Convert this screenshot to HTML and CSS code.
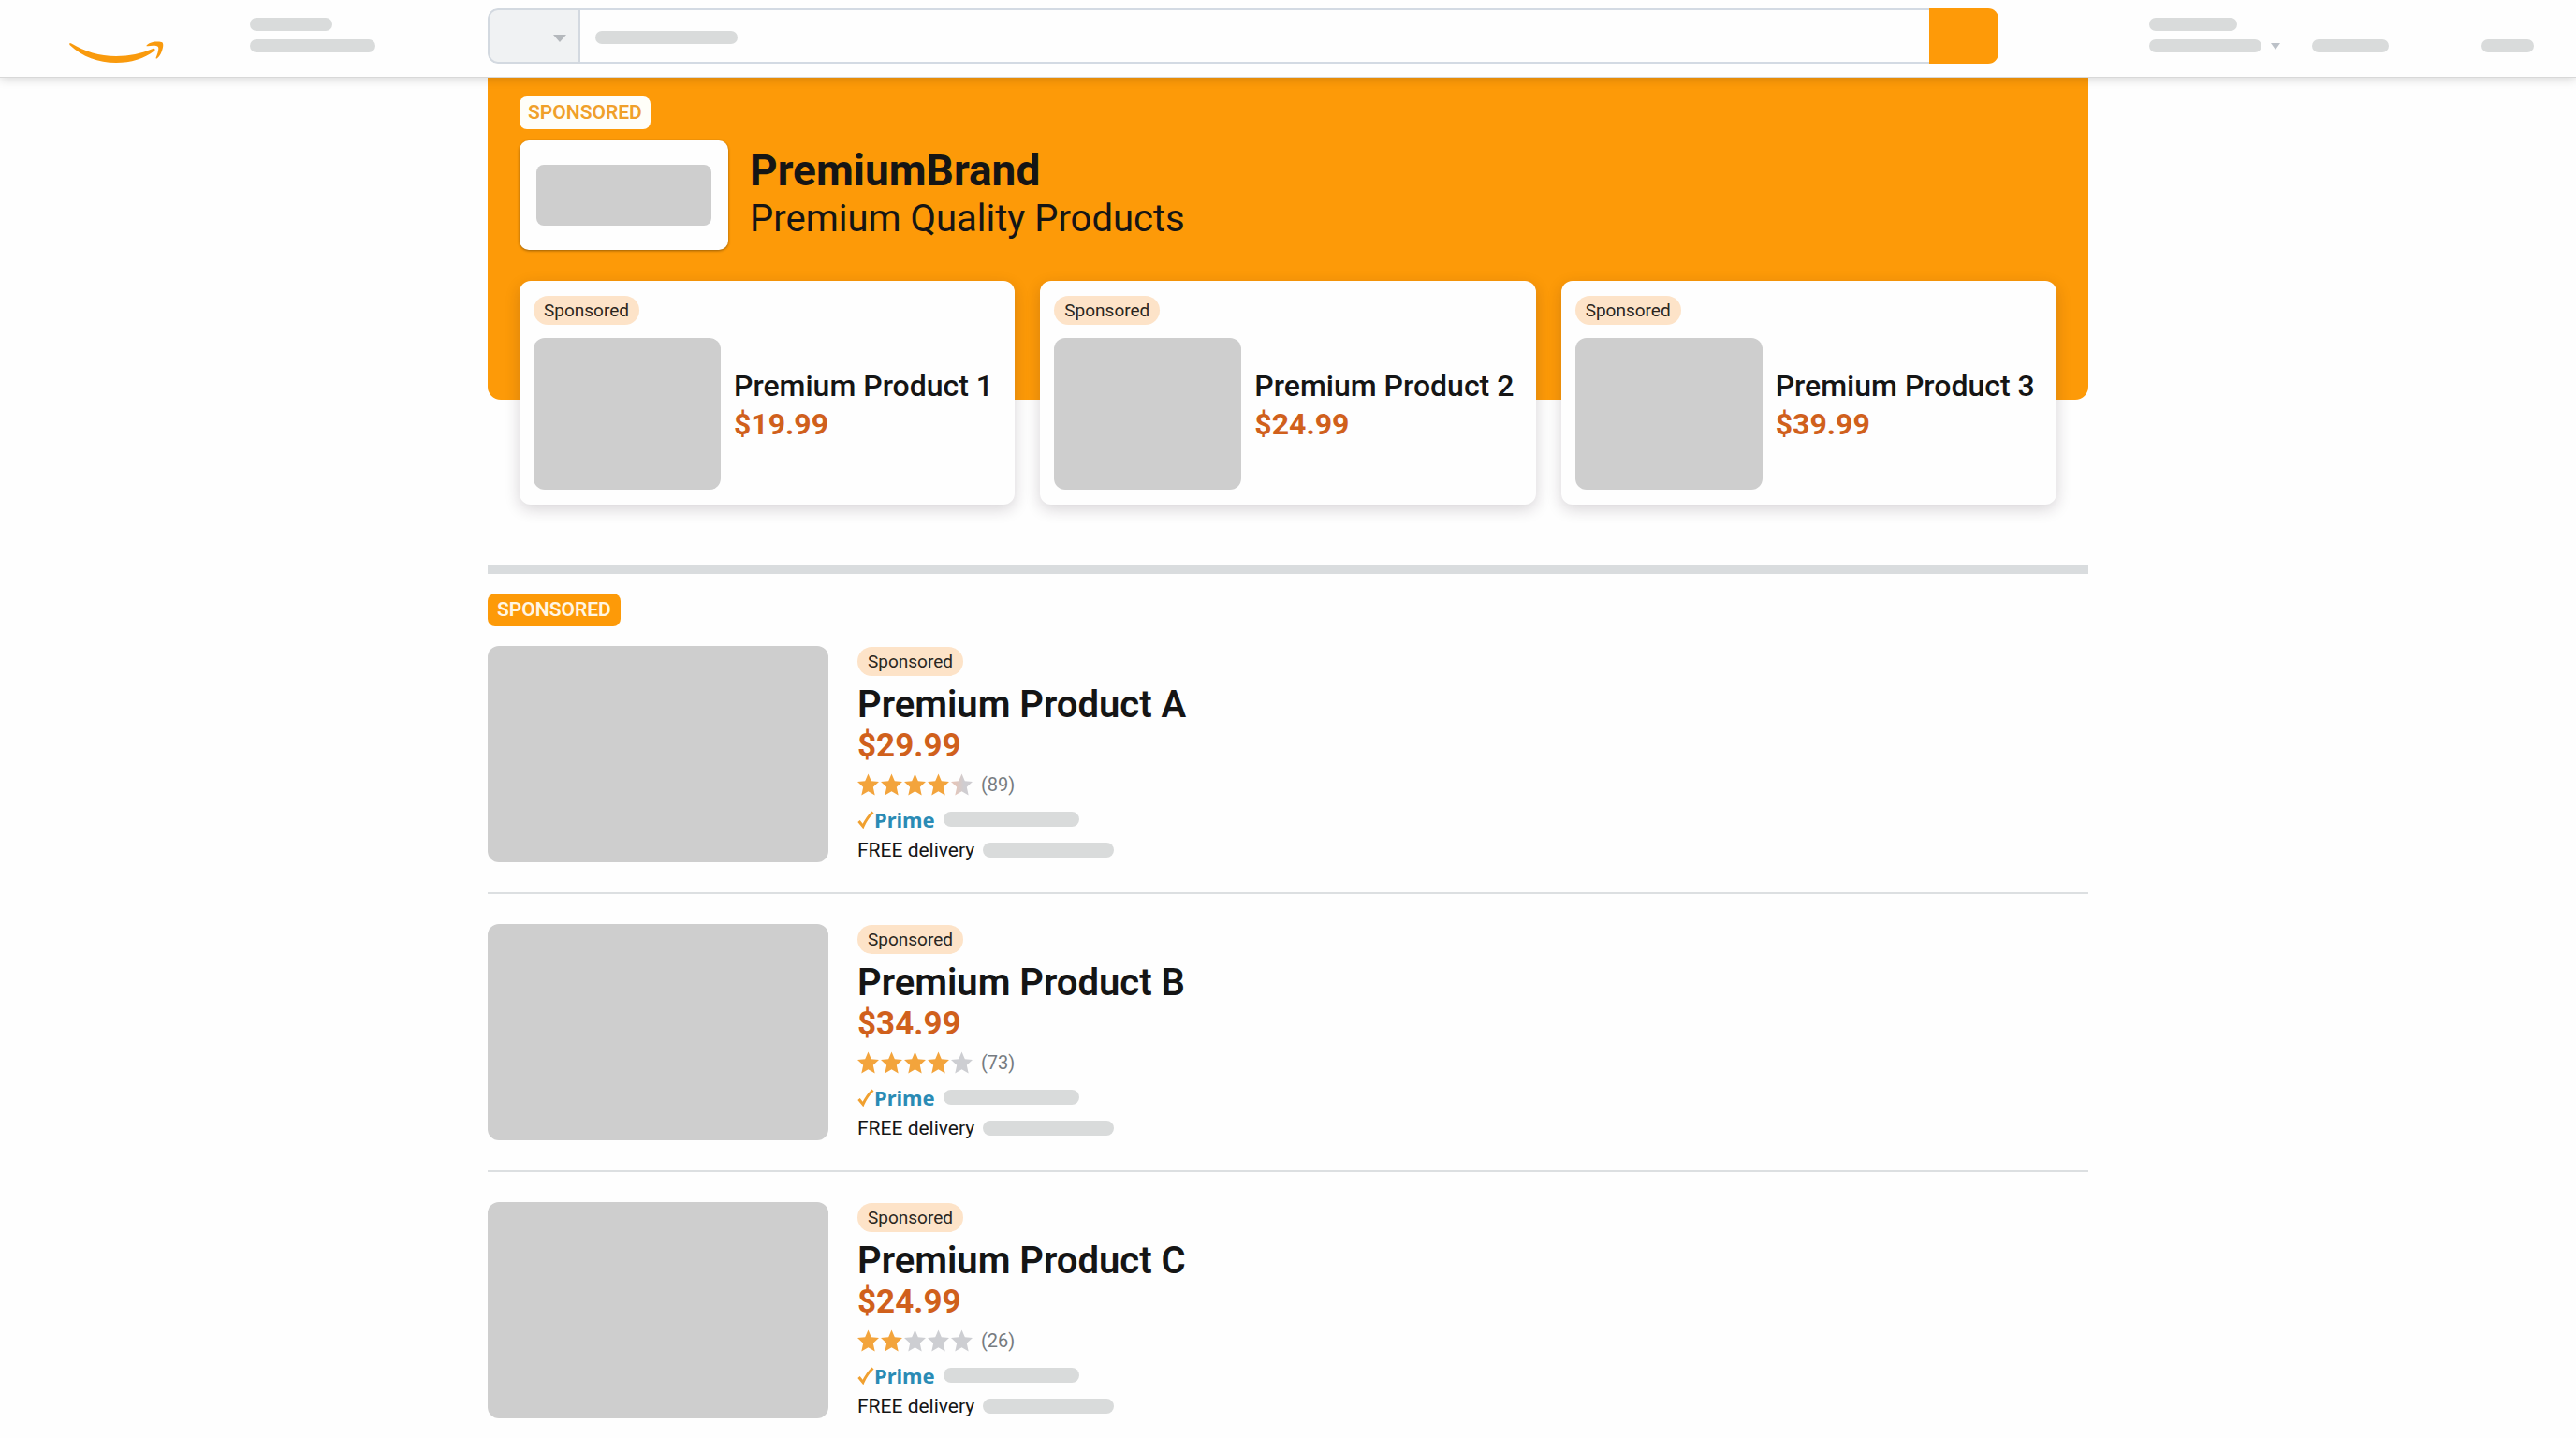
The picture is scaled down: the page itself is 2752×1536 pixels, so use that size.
FILE: index.html
```html
<!DOCTYPE html>
<html lang="en">
<head>
    <meta charset="UTF-8">
    <meta name="viewport" content="width=device-width, initial-scale=1.0">
    <title>Sponsored Products</title>
    <link rel="stylesheet" href="styles.css">
</head>
<body>
    <!-- shared icons -->
    <svg class="sprite" aria-hidden="true">
        <defs>
            <linearGradient id="partial">
                <stop offset="0.2" stop-color="#e3c6bb"/>
                <stop offset="0.6" stop-color="#cfcdd1"/>
            </linearGradient>
        </defs>
        <symbol id="star" viewBox="0 0 23 24">
            <path d="M11.5 0.5L14.8 8.3L23 9.1L16.8 14.8L18.7 23.5L11.5 19.2L4.3 23.5L6.2 14.800L0 9.1L8.2 8.3Z"/>
        </symbol>
        <symbol id="check" viewBox="0 0 18 20">
            <path d="M1.5 12L6 17.5Q10 8.500 16.500 2.500" fill="none" stroke="#f0a030" stroke-width="3"/>
        </symbol>
    </svg>

    <header class="header">
        <a class="logo" href="#" aria-label="Home">
            <svg viewBox="0 0 101 24" width="101" height="24">
                <path d="M0.500 2.200C0 3 0.300 3.800 1 4.500C14 16.500 31 23 50 23C66 23 80 18.500 91 10.200C92.500 9 91 7.200 89.300 7.900C77 13.200 64 15.900 50 15.900C32 15.900 17 11 2.300 2.500C1.500 2 0.900 1.700 0.500 2.200Z"/>
                <path d="M82.600 4.600C85 1.500 91 -0.500 98.500 0.900C100.500 1.300 100.600 4 99.800 7.500C98.800 12 96.800 15.800 94 18.300C93 19 92.300 18.500 92.700 17.400C94.300 13.500 96 8.500 95 6.300C94 4.300 88 4.500 84 5.200C82.500 5.500 82.200 5.200 82.600 4.600Z"/>
            </svg>
        </a>
        <a class="location stack" href="#" aria-label="Delivery location">
            <span class="bar bar-88"></span>
            <span class="bar bar-134"></span>
        </a>
        <form class="search">
            <div class="search-category">
                <select aria-label="Category"><option></option></select>
                <span class="caret caret-lg"></span>
            </div>
            <div class="search-field">
                <input type="text" aria-label="Search">
                <span class="bar bar-152"></span>
            </div>
            <button type="submit" aria-label="Search"></button>
        </form>
        <a class="account stack" href="#" aria-label="Account">
            <span class="bar bar-94"></span>
            <span class="account-row">
                <span class="bar bar-120"></span>
                <span class="caret"></span>
            </span>
        </a>
        <a class="orders stack" href="#" aria-label="Orders"><span class="bar bar-82"></span></a>
        <a class="stack" href="#" aria-label="Cart"><span class="bar bar-56"></span></a>
    </header>

    <main class="page">
        <section class="banner">
            <span class="tag tag-light">SPONSORED</span>
            <div class="brand">
                <div class="brand-logo"><div class="placeholder"></div></div>
                <div class="brand-text">
                    <h1>PremiumBrand</h1>
                    <p>Premium Quality Products</p>
                </div>
            </div>
            <div class="cards">
                <article class="card">
                    <span class="chip">Sponsored</span>
                    <div class="card-body">
                        <div class="placeholder card-thumb"></div>
                        <div class="card-info">
                            <h2>Premium Product 1</h2>
                            <p class="price">$19.99</p>
                        </div>
                    </div>
                </article>
                <article class="card">
                    <span class="chip">Sponsored</span>
                    <div class="card-body">
                        <div class="placeholder card-thumb"></div>
                        <div class="card-info">
                            <h2>Premium Product 2</h2>
                            <p class="price">$24.99</p>
                        </div>
                    </div>
                </article>
                <article class="card">
                    <span class="chip">Sponsored</span>
                    <div class="card-body">
                        <div class="placeholder card-thumb"></div>
                        <div class="card-info">
                            <h2>Premium Product 3</h2>
                            <p class="price">$39.99</p>
                        </div>
                    </div>
                </article>
            </div>
        </section>

        <section class="results">
            <span class="tag">SPONSORED</span>

            <article class="product">
                <div class="placeholder product-thumb"></div>
                <div class="product-info">
                    <span class="chip">Sponsored</span>
                    <h2>Premium Product A</h2>
                    <p class="price">$29.99</p>
                    <div class="rating">
                        <svg class="star on"><use href="#star"/></svg>
                        <svg class="star on"><use href="#star"/></svg>
                        <svg class="star on"><use href="#star"/></svg>
                        <svg class="star on"><use href="#star"/></svg>
                        <svg class="star partial"><use href="#star"/></svg>
                        <span class="count">(89)</span>
                    </div>
                    <div class="prime">
                        <svg class="check"><use href="#check"/></svg>
                        <span class="prime-label">Prime</span>
                        <span class="bar bar-145"></span>
                    </div>
                    <div class="delivery">
                        <span>FREE delivery</span>
                        <span class="bar bar-140"></span>
                    </div>
                </div>
            </article>

            <article class="product">
                <div class="placeholder product-thumb"></div>
                <div class="product-info">
                    <span class="chip">Sponsored</span>
                    <h2>Premium Product B</h2>
                    <p class="price">$34.99</p>
                    <div class="rating">
                        <svg class="star on"><use href="#star"/></svg>
                        <svg class="star on"><use href="#star"/></svg>
                        <svg class="star on"><use href="#star"/></svg>
                        <svg class="star on"><use href="#star"/></svg>
                        <svg class="star"><use href="#star"/></svg>
                        <span class="count">(73)</span>
                    </div>
                    <div class="prime">
                        <svg class="check"><use href="#check"/></svg>
                        <span class="prime-label">Prime</span>
                        <span class="bar bar-145"></span>
                    </div>
                    <div class="delivery">
                        <span>FREE delivery</span>
                        <span class="bar bar-140"></span>
                    </div>
                </div>
            </article>

            <article class="product">
                <div class="placeholder product-thumb"></div>
                <div class="product-info">
                    <span class="chip">Sponsored</span>
                    <h2>Premium Product C</h2>
                    <p class="price">$24.99</p>
                    <div class="rating">
                        <svg class="star on"><use href="#star"/></svg>
                        <svg class="star on"><use href="#star"/></svg>
                        <svg class="star"><use href="#star"/></svg>
                        <svg class="star"><use href="#star"/></svg>
                        <svg class="star"><use href="#star"/></svg>
                        <span class="count">(26)</span>
                    </div>
                    <div class="prime">
                        <svg class="check"><use href="#check"/></svg>
                        <span class="prime-label">Prime</span>
                        <span class="bar bar-145"></span>
                    </div>
                    <div class="delivery">
                        <span>FREE delivery</span>
                        <span class="bar bar-140"></span>
                    </div>
                </div>
            </article>
        </section>
    </main>
</body>
</html>
```
FILE: styles.css
```css
* {
    box-sizing: border-box;
}
body {
    margin: 0;
    font-family: Roboto, "Liberation Sans", sans-serif;
    font-size: 20px;
    color: #151515;
    background: #fefefe;
}
h1, h2, p {
    margin: 0;
}
.sprite {
    position: absolute;
    width: 0;
    height: 0;
}

/* placeholders */
.bar {
    display: block;
    height: 14px;
    border-radius: 7px;
    background: #d9dbdb;
}
.bar-56 { width: 56px; }
.bar-82 { width: 82px; }
.bar-88 { width: 88px; }
.bar-94 { width: 94px; }
.bar-120 { width: 120px; }
.bar-134 { width: 134px; }
.bar-140 { width: 140px; }
.bar-145 { width: 145px; }
.bar-152 { width: 152px; }
.placeholder {
    background: #cecece;
    border-radius: 12px;
}

/* header */
.header {
    position: relative;
    z-index: 1;
    display: flex;
    align-items: flex-end;
    padding: 9px 45px 14px 74px;
    background: #fefefe;
    border-bottom: 1px solid #d8d8d8;
    box-shadow: 0 2px 10px rgba(0, 0, 0, 0.15);
}
.logo {
    display: flex;
    margin-right: 92px;
}
.logo svg {
    fill: #f99a0d;
}
.stack {
    display: flex;
    flex-direction: column;
    gap: 9px;
    padding-bottom: 12px;
}
.search {
    flex: 1;
    display: flex;
    height: 59px;
    margin: 0 161px 0 120px;
    border-radius: 11px;
    overflow: hidden;
}
.search-category {
    position: relative;
    width: 99px;
}
.search-category select {
    appearance: none;
    width: 100%;
    height: 100%;
    border: 2px solid #d3d9e0;
    border-radius: 11px 0 0 11px;
    background: #f0f2f3;
}
.search-field {
    position: relative;
    flex: 1;
}
.search-field input {
    width: 100%;
    height: 100%;
    padding: 0 17px;
    font: inherit;
    border: solid #d3dae3;
    border-width: 2px 0;
    background: #fefefe;
}
.search-field .bar {
    position: absolute;
    left: 16px;
    top: 24px;
}
.search button {
    width: 74px;
    border: none;
    background: #fe9a08;
    cursor: pointer;
}
.caret {
    border: 5px solid transparent;
    border-top: 7px solid #bcc1c8;
    border-bottom: 0;
}
.caret-lg {
    position: absolute;
    right: 15px;
    top: 28px;
    border-width: 8px 7px 0;
    border-top-color: #b4b8bc;
}
.account {
    margin-right: 34px;
}
.account-row {
    display: flex;
    align-items: center;
    gap: 10px;
}
.orders {
    margin-right: 99px;
}

/* banner */
.page {
    max-width: 1710px;
    margin: 0 auto;
    padding-bottom: 20px;
}
.banner {
    display: flex;
    flex-direction: column;
    align-items: flex-start;
    padding: 20px 34px 0;
    margin-bottom: 176px;
    background: #fd9a08;
    border-radius: 0 0 14px 14px;
}
.tag {
    display: inline-block;
    padding: 0 10px;
    font-size: 21px;
    line-height: 35px;
    font-weight: 600;
    border-radius: 8px;
    color: #fff6e4;
    background: #fd9a08;
}
.tag-light {
    padding: 0 9px;
    color: #f0a02a;
    background: #fffef8;
}
.brand {
    display: flex;
    align-items: center;
    gap: 23px;
    margin: 12px 0 33px;
}
.brand-logo {
    width: 223px;
    padding: 26px 18px;
    background: #fefefe;
    border-radius: 10px;
    box-shadow: 0 1px 3px rgba(0, 0, 0, 0.4);
}
.brand-logo .placeholder {
    height: 65px;
    border-radius: 8px;
}
.brand-text {
    padding-bottom: 4px;
}
.brand-text h1 {
    font-size: 46px;
    line-height: 54px;
    font-weight: 700;
}
.brand-text p {
    font-size: 40px;
    line-height: 50px;
}
.cards {
    align-self: stretch;
    display: grid;
    grid-template-columns: repeat(3, 1fr);
    gap: 27px;
    margin-bottom: -112px;
}
.card {
    padding: 16px 15px;
    background: #fefefe;
    border-radius: 12px;
    box-shadow: 0 5px 16px rgba(40, 20, 40, 0.18);
}
.chip {
    display: block;
    width: fit-content;
    padding: 0 11px;
    font-size: 19px;
    line-height: 31px;
    border-radius: 16px;
    color: #2b2620;
    background: #fde3c8;
}
.card-body {
    display: flex;
    align-items: center;
    gap: 14px;
    margin-top: 14px;
}
.card-thumb {
    width: 200px;
    height: 162px;
}
.card-info {
    padding-bottom: 18px;
}
.card-info h2 {
    font-size: 32px;
    line-height: 40px;
    font-weight: 500;
}
.price {
    font-size: 32px;
    line-height: 42px;
    font-weight: 700;
    color: #d0601c;
}

/* results */
.results {
    padding-top: 21px;
    border-top: 10px solid #d9dcde;
}
.product {
    display: flex;
    align-items: flex-end;
    gap: 31px;
    padding: 32px 0;
    border-bottom: 2px solid #dcdfe1;
}
.tag + .product {
    padding-top: 21px;
}
.product:last-child {
    padding-bottom: 0;
    border-bottom: none;
}
.product-thumb {
    width: 364px;
    height: 231px;
}
.product h2 {
    margin-top: 8px;
    font-size: 40px;
    line-height: 46px;
    font-weight: 600;
}
.product .price {
    font-size: 35px;
}
.rating {
    display: flex;
    align-items: center;
    gap: 2px;
    height: 24px;
    margin-top: 8px;
}
.star {
    width: 23px;
    height: 24px;
    fill: #cdced2;
}
.star.on {
    fill: #f3a43c;
}
.star.partial {
    fill: url(#partial);
}
.count {
    margin-left: 7px;
    color: #767b80;
}
.prime, .delivery {
    display: flex;
    align-items: center;
    height: 26px;
}
.prime {
    margin-top: 12px;
}
.check {
    width: 18px;
    height: 20px;
}
.prime-label {
    margin-right: 9px;
    font-family: "Noto Sans", sans-serif;
    font-size: 22px;
    line-height: 26px;
    font-weight: 700;
    color: #2a8bb5;
}
.delivery {
    gap: 9px;
    margin-top: 7px;
    font-size: 21px;
}
.prime .bar, .delivery .bar {
    height: 16px;
    border-radius: 8px;
}
```
